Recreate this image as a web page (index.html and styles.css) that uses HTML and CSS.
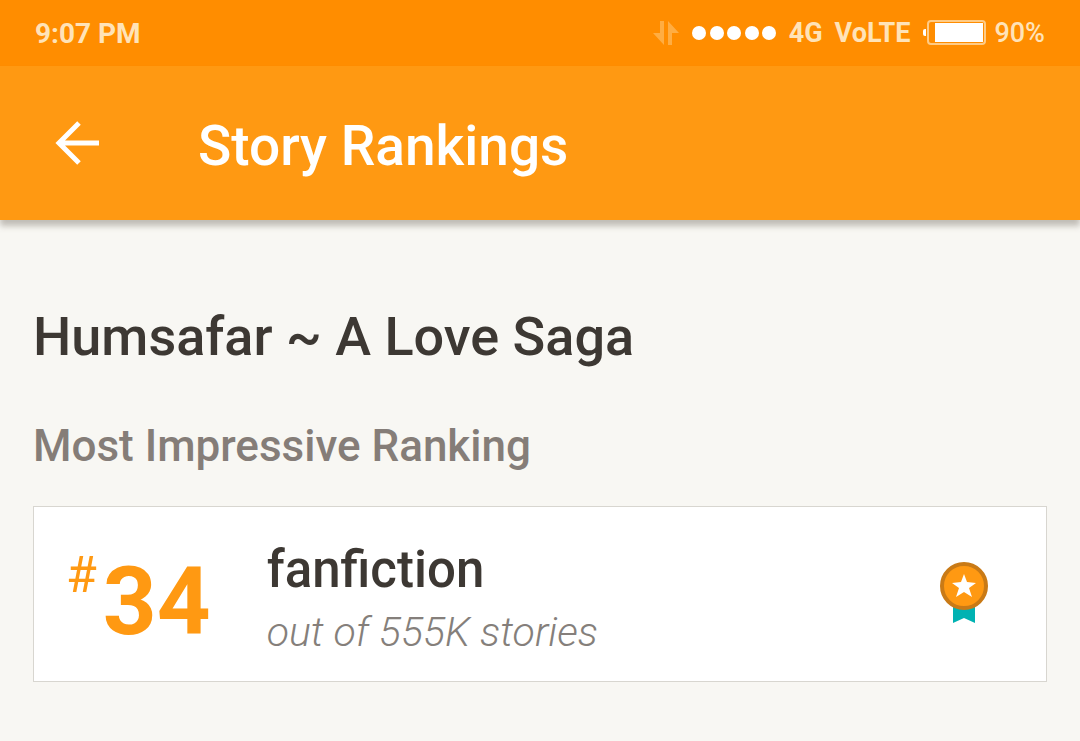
FILE: index.html
```html
<!DOCTYPE html>
<html lang="en">
<head>
<meta charset="utf-8">
<meta name="viewport" content="width=device-width, initial-scale=1">
<title>Story Rankings</title>
<link rel="stylesheet" href="styles.css">
</head>
<body>
<div class="status">
  <time class="clock">9:07 PM</time>
  <div class="indicators">
    <svg class="arrows" width="26" height="26" viewBox="0 0 26 26" fill="#ffad42" aria-hidden="true"><path d="M7 1h4v24L0 13h7z"/><path d="M15 25h4V13h7L15 1z"/></svg>
    <svg class="signal" width="86" height="16" viewBox="0 0 86 16" fill="#fff" aria-hidden="true"><circle cx="8" cy="8" r="7"/><circle cx="26" cy="8" r="7"/><circle cx="43" cy="8" r="7"/><circle cx="61" cy="8" r="7"/><circle cx="78" cy="8" r="7"/></svg>
    <span class="network">4G</span>
    <span class="volte">VoLTE</span>
    <svg class="battery" width="64" height="26" viewBox="0 0 64 26" aria-hidden="true"><rect x="6" y="1" width="57" height="23" rx="3" fill="none" stroke="#ffcb85" stroke-width="2"/><rect x="13" y="3" width="48" height="19" fill="#fff"/><path d="M4 9v7H3a2 2 0 0 1-2-2v-3a2 2 0 0 1 2-2z" fill="#fff"/></svg>
    <span class="percent">90%</span>
  </div>
</div>
<header class="appbar">
  <button class="back" type="button" aria-label="Back"><svg width="44" height="44" viewBox="0 0 44 44" fill="none" stroke="#fff" stroke-width="5" aria-hidden="true"><path d="M44 22H5M24 2L4 22l20 20"/></svg></button>
  <h1 class="title">Story Rankings</h1>
</header>
<main class="content">
  <h2 class="story">Humsafar ~ A Love Saga</h2>
  <h3 class="section">Most Impressive Ranking</h3>
  <article class="card">
    <div class="rank"><span class="hash">#</span><span class="number">34</span></div>
    <div class="details"><p class="tag">fanfiction</p><p class="total">out of 555K stories</p></div>
    <svg class="medal" width="50" height="66" viewBox="0 0 50 66" aria-hidden="true"><path d="M14 40h22v22l-11-5-11 5z" fill="#00b2b2"/><circle cx="25" cy="25" r="22" fill="#ff9912" stroke="#c97a16" stroke-width="4"/><path d="M25 13l3 8 9 1-7 5 3 9-8-5-8 5 3-9-7-5 9-1z" fill="#fff"/></svg>
  </article>
</main>
</body>
</html>
```
FILE: styles.css
```css
* { box-sizing: border-box; }
body { margin: 0; background: #f8f7f3; font-family: Roboto, "Liberation Sans", sans-serif; }
h1, h2, h3, p { margin: 0; font-weight: 500; }
.status { display: flex; justify-content: space-between; align-items: center; min-height: 66px; padding: 0 35px; background: #ff8d00; color: #ffe3b8; font-size: 27px; font-weight: 700; }
.clock { font-size: 28px; }
.indicators { display: flex; align-items: center; }
.signal { margin: 0 12px; }
.volte { margin: 0 12px; }
.percent { margin-left: 8px; font-weight: 500; }
.appbar { display: flex; align-items: center; min-height: 154px; padding: 0 55px; background: #ff9912; color: #fff; box-shadow: 0 6px 6px rgba(90, 80, 70, .35); }
.back { display: flex; padding: 0; border: 0; background: none; }
.title { margin-left: 99px; padding-top: 6px; font-size: 55px; line-height: 64px; }
.content { padding: 84px 33px 56px; }
.story { font-size: 54px; line-height: 66px; color: #3d3833; }
.section { margin-top: 48px; font-size: 44px; line-height: 56px; color: #857d78; }
.card { display: flex; align-items: center; min-height: 176px; margin-top: 32px; padding: 0 57px 0 32px; border: 1px solid #d8d6d0; background: #fff; }
.rank { display: flex; align-items: flex-start; gap: 6px; padding-top: 16px; color: #ff9912; }
.hash { font-size: 50px; line-height: 50px; }
.number { font-size: 94px; line-height: 104px; font-weight: 700; }
.details { flex: 1; margin-left: 56px; padding-top: 12px; }
.tag { font-size: 51px; line-height: 64px; color: #3d3833; }
.total { font-size: 41px; line-height: 60px; font-style: italic; font-weight: 300; color: #857f7b; }
```
